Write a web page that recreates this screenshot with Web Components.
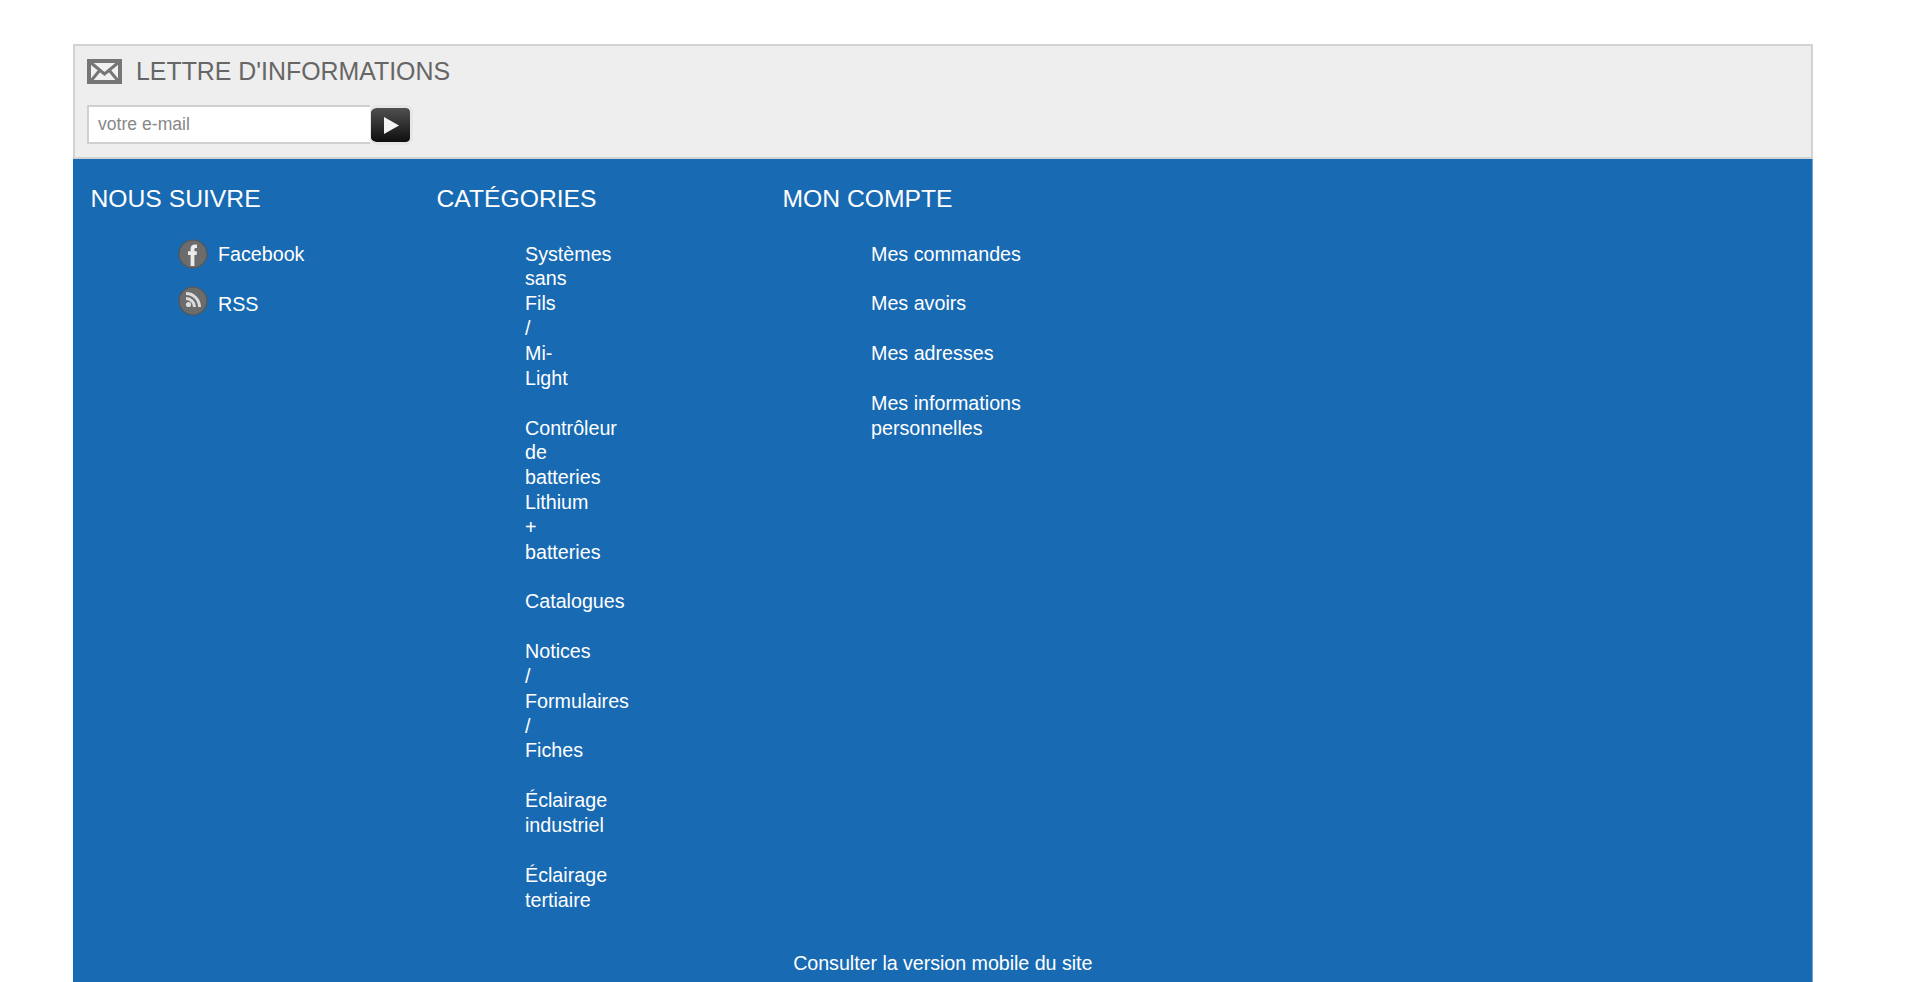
<!DOCTYPE html>
<html lang="fr">
<head>
<meta charset="utf-8">
<title>Pied de page</title>
<style>
  html, body { margin: 0; background: #fff; height: 982px; overflow: hidden; }
  body { font-family: "Liberation Sans", Arial, sans-serif; padding: 44px 106px 0 73px; box-sizing: border-box; }
</style>
</head>
<body>
<site-footer>
  <newsletter-box slot="top"></newsletter-box>
  <link-column title="NOUS SUIVRE" fit="nowrap">
    <social-link kind="facebook">Facebook</social-link>
    <social-link kind="rss">RSS</social-link>
  </link-column>
  <link-column title="CATÉGORIES" fit="1px">
    <a>Systèmes sans Fils / Mi-Light</a>
    <a>Contrôleur de batteries Lithium + batteries</a>
    <a>Catalogues</a>
    <a>Notices / Formulaires / Fiches</a>
    <a>Éclairage industriel</a>
    <a>Éclairage tertiaire</a>
  </link-column>
  <link-column title="MON COMPTE" fit="160px">
    <a>Mes commandes</a>
    <a>Mes avoirs</a>
    <a>Mes adresses</a>
    <a>Mes informations personnelles</a>
  </link-column>
  <span slot="bottom">Consulter la version mobile du site</span>
</site-footer>

<script>
class SiteFooter extends HTMLElement {
  constructor(){
    super();
    this.attachShadow({mode: 'open'});
    this.shadowRoot.innerHTML = /* html */`
    <style>
      :host{
        display: block;
        width: 1740px;
      }
      .blue{
        background-color: #186ab3;
        color: white;
        padding: 23px 18px 0 17.5px;
        box-shadow: inset -1px 0 0 #6fa3d3;
      }
      .cols{
        display: grid;
        grid-template-columns: repeat(3, 346px);
      }
      .mobile{
        padding-top: 38.4px;
        padding-bottom: 20px;
        text-align: center;
        font-size: 19.7px;
        line-height: 25px;
        letter-spacing: -0.05px;
      }
    </style>
    <slot name="top"></slot>
    <div class="blue">
      <div class="cols"><slot></slot></div>
      <div class="mobile"><slot name="bottom"></slot></div>
    </div>
    `;
  }
}

class NewsletterBox extends HTMLElement {
  constructor(){
    super();
    this.attachShadow({mode: 'open'});
    this.shadowRoot.innerHTML = /* html */`
    <style>
      :host{
        display: block;
        box-sizing: border-box;
        height: 115px;
        background-color: #eeeeee;
        border: 2px solid #d2d2d2;
        padding: 8px 12px 0;
      }
      .head{
        display: flex;
        align-items: center;
        gap: 14px;
        height: 34px;
        color: #666;
        font-size: 24.9px;
      }
      .head svg{
        flex: none;
        filter: blur(0.5px);
      }
      .form{
        display: flex;
        align-items: flex-start;
        margin-top: 17px;
      }
      .field{
        box-sizing: border-box;
        width: 283px;
        height: 39px;
        background: white;
        border: 2px solid #d0d0d0;
        border-right: 0;
        padding-left: 9px;
        color: #888;
        font-size: 17.6px;
        line-height: 35px;
      }
      .go{
        box-sizing: border-box;
        width: 43px;
        height: 40px;
        border-radius: 7px;
        border: 3px solid #e6e6e6;
        border-left-width: 1px;
        background: linear-gradient(#505050, #0e0e0e) padding-box;
        display: flex;
        justify-content: center;
        align-items: center;
      }
      .go svg{
        filter: blur(0.4px);
      }
    </style>
    <div class="head">
      <svg width="35" height="25" viewBox="0 0 35 25">
        <rect x="2" y="2" width="31" height="21" fill="#f1f1f1" stroke="#767676" stroke-width="4"/>
        <path d="M3 3 L17.5 15 L32 3 M3 23 L13 11 M32 23 L22 11" fill="none" stroke="#767676" stroke-width="3"/>
      </svg>
      <span>LETTRE D'INFORMATIONS</span>
    </div>
    <div class="form">
      <div class="field">votre e-mail</div>
      <div class="go">
        <svg width="16" height="17" viewBox="0 0 16 17"><path d="M1 0 L16 8.5 L1 17 Z" fill="#f4f4f4"/></svg>
      </div>
    </div>
    `;
  }
}

class LinkColumn extends HTMLElement {
  constructor(){
    super();
    this.attachShadow({mode: 'open'});
    this.shadowRoot.innerHTML = /* html */`
    <style>
      :host{
        display: block;
        color: white;
      }
      h4{
        margin: 0;
        font-size: 24.7px;
        font-weight: normal;
        line-height: 34px;
      }
      .list{
        display: flex;
        flex-direction: column;
        align-items: flex-start;
        gap: 24.85px;
        margin-top: 25.6px;
        padding-left: 88.5px;
        font-size: 19.7px;
        line-height: 24.85px;
      }
      ::slotted(a){
        display: block;
      }
    </style>
    <h4></h4>
    <div class="list"><slot></slot></div>
    `;
  }

  connectedCallback(){
    this.shadowRoot.querySelector('h4').textContent = this.getAttribute('title');
    this.removeAttribute('title');
    const fit = this.getAttribute('fit');
    for (const el of this.children){
      if (fit === 'nowrap') el.style.whiteSpace = 'nowrap';
      else el.style.width = fit;
    }
  }
}

class SocialLink extends HTMLElement {
  constructor(){
    super();
    this.attachShadow({mode: 'open'});
    this.shadowRoot.innerHTML = /* html */`
    <style>
      :host{
        display: flex;
        align-items: center;
        gap: 10px;
        height: 25px;
        margin-left: -1px;
      }
      :host([kind="rss"]) svg{
        margin-top: -6px;
      }
      svg{
        flex: none;
        filter: blur(0.4px);
      }
    </style>
    <svg width="30" height="30" viewBox="0 0 30 30"></svg>
    <span><slot></slot></span>
    `;
  }

  connectedCallback(){
    const disc = '<circle cx="15" cy="15" r="14" fill="#6c6c6c" stroke="#555" stroke-width="1.2"/>';
    const glyphs = {
      facebook: '<path d="M12.6 27 V16 H10 V12.3 H12.6 V10 C12.6 6.6 14.8 5.2 19 5.7 V9 C16.8 8.8 16.4 9.4 16.4 10.6 V12.3 H19 L18.6 16 H16.4 V27 Z" fill="#ececec"/>',
      rss: '<circle cx="10.5" cy="18.5" r="2.6" fill="#dcdcdc"/><path d="M8 12.5 A8.5 8.5 0 0 1 16.5 21 M8 7.5 A13.5 13.5 0 0 1 21.5 21" fill="none" stroke="#dcdcdc" stroke-width="3"/>'
    };
    this.shadowRoot.querySelector('svg').innerHTML = disc + glyphs[this.getAttribute('kind')];
  }
}

customElements.define('site-footer', SiteFooter);
customElements.define('newsletter-box', NewsletterBox);
customElements.define('link-column', LinkColumn);
customElements.define('social-link', SocialLink);
</script>
</body>
</html>
